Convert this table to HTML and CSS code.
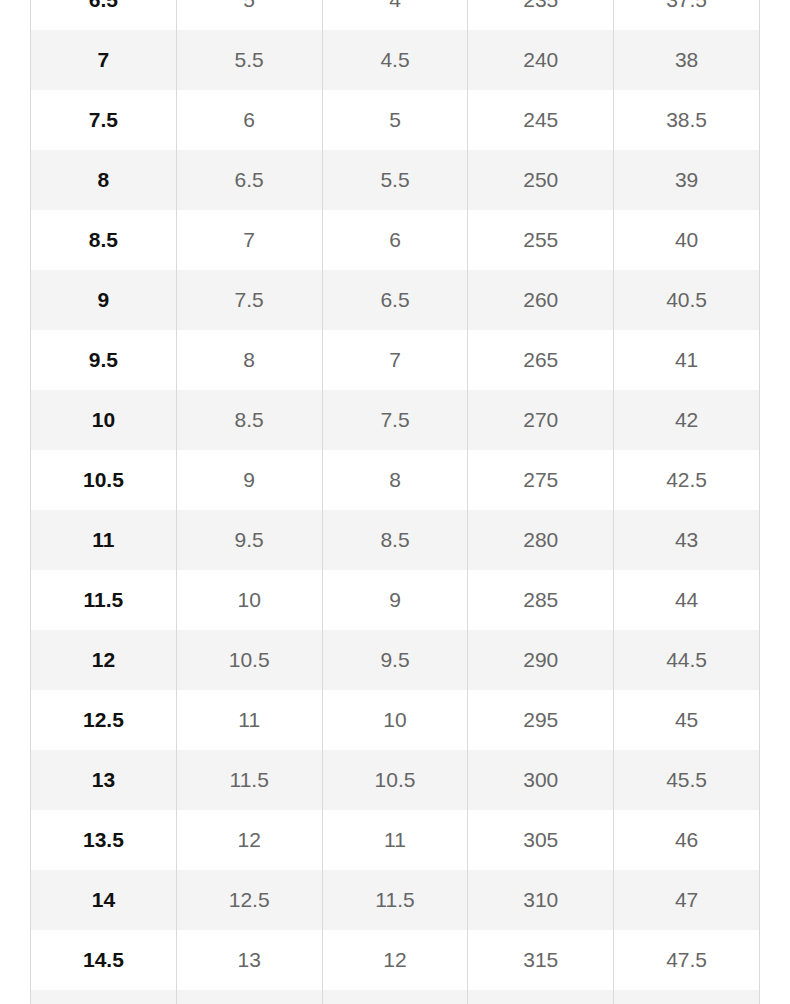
FILE: index.html
```html
<!DOCTYPE html>
<html>
<head>
<meta charset="utf-8">
<link rel="stylesheet" href="styles.css">
</head>
<body>
<div class="wrap">
<table class="sizes">
<tbody>
<tr><td>6.5</td><td>5</td><td>4</td><td>235</td><td>37.5</td></tr>
<tr><td>7</td><td>5.5</td><td>4.5</td><td>240</td><td>38</td></tr>
<tr><td>7.5</td><td>6</td><td>5</td><td>245</td><td>38.5</td></tr>
<tr><td>8</td><td>6.5</td><td>5.5</td><td>250</td><td>39</td></tr>
<tr><td>8.5</td><td>7</td><td>6</td><td>255</td><td>40</td></tr>
<tr><td>9</td><td>7.5</td><td>6.5</td><td>260</td><td>40.5</td></tr>
<tr><td>9.5</td><td>8</td><td>7</td><td>265</td><td>41</td></tr>
<tr><td>10</td><td>8.5</td><td>7.5</td><td>270</td><td>42</td></tr>
<tr><td>10.5</td><td>9</td><td>8</td><td>275</td><td>42.5</td></tr>
<tr><td>11</td><td>9.5</td><td>8.5</td><td>280</td><td>43</td></tr>
<tr><td>11.5</td><td>10</td><td>9</td><td>285</td><td>44</td></tr>
<tr><td>12</td><td>10.5</td><td>9.5</td><td>290</td><td>44.5</td></tr>
<tr><td>12.5</td><td>11</td><td>10</td><td>295</td><td>45</td></tr>
<tr><td>13</td><td>11.5</td><td>10.5</td><td>300</td><td>45.5</td></tr>
<tr><td>13.5</td><td>12</td><td>11</td><td>305</td><td>46</td></tr>
<tr><td>14</td><td>12.5</td><td>11.5</td><td>310</td><td>47</td></tr>
<tr><td>14.5</td><td>13</td><td>12</td><td>315</td><td>47.5</td></tr>
<tr><td>15</td><td>13.5</td><td>12.5</td><td>320</td><td>48</td></tr>
</tbody>
</table>
</div>
</body>
</html>
```
FILE: styles.css
```css
html, body {
  margin: 0;
  padding: 0;
  background: #ffffff;
  overflow: hidden;
}
.wrap {
  padding: 0 30px;
  margin-top: -30px;
}
.sizes {
  width: 730px;
  border-collapse: collapse;
  table-layout: fixed;
  font-family: "Liberation Sans", Arial, sans-serif;
  font-size: 21px;
}
.sizes td {
  height: 60px;
  padding: 0;
  text-align: center;
  vertical-align: middle;
  color: #666666;
  border-left: 1px solid #dadada;
  border-right: 1px solid #dadada;
}
.sizes td:first-child {
  color: #111111;
  font-weight: bold;
}
.sizes tr:nth-child(even) td {
  background: #f4f4f4;
}
```
